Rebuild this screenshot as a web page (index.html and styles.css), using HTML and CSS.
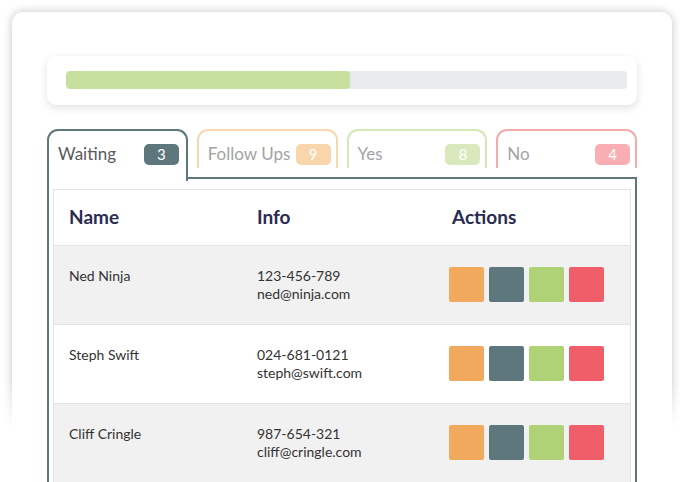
FILE: index.html
```html
<!DOCTYPE html>
<html lang="en">
<head>
<meta charset="utf-8">
<title>Leads</title>
<link rel="stylesheet" href="styles.css">
</head>
<body>
<div class="card">
  <div class="progress-box">
    <div class="track"><div class="fill" style="width:50.7%"></div></div>
  </div>

  <div class="tabs">
    <div class="tab tab-active"><span class="tab-label">Waiting</span><span class="badge badge-slate">3</span></div>
    <div class="tab tab-orange"><span class="tab-label">Follow Ups</span><span class="badge badge-orange">9</span></div>
    <div class="tab tab-green"><span class="tab-label">Yes</span><span class="badge badge-green">8</span></div>
    <div class="tab tab-red"><span class="tab-label">No</span><span class="badge badge-red">4</span></div>
  </div>

  <div class="panel">
    <div class="table">
      <div class="row head">
        <div class="cell">Name</div>
        <div class="cell">Info</div>
        <div class="cell actions-head">Actions</div>
      </div>
      <div class="row shaded">
        <div class="cell">Ned Ninja</div>
        <div class="cell">123-456-789<br>ned@ninja.com</div>
        <div class="cell actions"><span class="sq sq-orange"></span><span class="sq sq-slate"></span><span class="sq sq-green"></span><span class="sq sq-red"></span></div>
      </div>
      <div class="row">
        <div class="cell">Steph Swift</div>
        <div class="cell">024-681-0121<br>steph@swift.com</div>
        <div class="cell actions"><span class="sq sq-orange"></span><span class="sq sq-slate"></span><span class="sq sq-green"></span><span class="sq sq-red"></span></div>
      </div>
      <div class="row shaded">
        <div class="cell">Cliff Cringle</div>
        <div class="cell">987-654-321<br>cliff@cringle.com</div>
        <div class="cell actions"><span class="sq sq-orange"></span><span class="sq sq-slate"></span><span class="sq sq-green"></span><span class="sq sq-red"></span></div>
      </div>
    </div>
  </div>
</div>
</body>
</html>
```

FILE: styles.css
```css
html, body {
  margin: 0;
  padding: 0;
  height: 100%;
  overflow: hidden;
  background: #ffffff;
  font-family: Lato, "Liberation Sans", sans-serif;
}

.card {
  position: relative;
  isolation: isolate;
  margin: 12px 12px 0 12px;
  padding: 44px 35px 0 35px;
  background: #ffffff;
  border-radius: 11px;
  min-height: 600px;
  box-sizing: border-box;
}

.card::before {
  content: "";
  position: absolute;
  inset: 0;
  border-radius: 11px;
  box-shadow: 0 0 10px rgba(0, 0, 0, 0.24);
  z-index: -1;
}

.card::after {
  content: "";
  position: absolute;
  left: -30px;
  right: -30px;
  top: 370px;
  bottom: -30px;
  background: linear-gradient(to bottom, rgba(255, 255, 255, 0) 0, #ffffff 45px);
  z-index: -1;
}

.progress-box {
  height: 49px;
  padding: 15px 10px 0 19px;
  box-sizing: border-box;
  border-radius: 9px;
  background: #ffffff;
  box-shadow: 0 3px 9px rgba(0, 0, 0, 0.12);
}

.track {
  height: 18px;
  border-radius: 4px;
  background: #e8ebee;
  overflow: hidden;
}

.fill {
  height: 100%;
  border-radius: 4px;
  background: #c7e09e;
}

.tabs {
  display: flex;
  gap: 9px;
  margin-top: 24px;
  height: 50px;
  align-items: flex-start;
}

.tab {
  position: relative;
  width: 141px;
  height: 39px;
  box-sizing: border-box;
  padding: 12px 5px 0 9px;
  border: 2px solid;
  border-bottom: none;
  border-radius: 11px 11px 0 0;
  display: flex;
  justify-content: space-between;
  align-items: flex-start;
  background: #ffffff;
}

.tab-label {
  font-size: 17px;
  line-height: 22px;
  color: #a3a3a3;
}

.tab-active {
  height: 52px;
  z-index: 1;
  border-color: #5d777c;
  padding-right: 7px;
}

.tab-active .tab-label {
  color: #58595b;
}

.tab-orange { border-color: #f8d7b0; }
.tab-green { border-color: #d6e7b9; }
.tab-red { border-color: #f6aaae; }

.badge {
  width: 35px;
  height: 21px;
  margin-top: 1px;
  border-radius: 5px;
  color: #ffffff;
  font-size: 15px;
  line-height: 21px;
  text-align: center;
}

.badge-slate { background: #5d777c; }
.badge-orange { background: #f8d5aa; }
.badge-green { background: #d9e8bd; }
.badge-red { background: #f8aeb2; }

.panel {
  margin-top: -2px;
  border: 2px solid #5d777c;
  border-bottom: none;
  padding: 10px 4px 0 4px;
  height: 400px;
}

.table {
  border: 1px solid #e4e4e4;
  border-bottom: none;
}

.row {
  display: grid;
  grid-template-columns: 188px 192px 1fr;
  padding: 21px 0 21px 15px;
  border-top: 1px solid #e4e4e4;
  font-size: 14px;
  line-height: 18px;
  color: #333333;
}

.row.head {
  border-top: none;
  padding: 17px 0 18px 15px;
  font-size: 19px;
  line-height: 20px;
  font-weight: bold;
  color: #2a2b52;
}

.row.shaded {
  background: #f1f1f1;
}

.actions-head {
  padding-left: 3px;
}

.actions {
  display: flex;
  gap: 5px;
}

.sq {
  width: 35px;
  height: 35px;
  border-radius: 2px;
}

.sq-orange { background: #f1aa5d; }
.sq-slate { background: #5d777c; }
.sq-green { background: #b0d277; }
.sq-red { background: #ef5e69; }
```
